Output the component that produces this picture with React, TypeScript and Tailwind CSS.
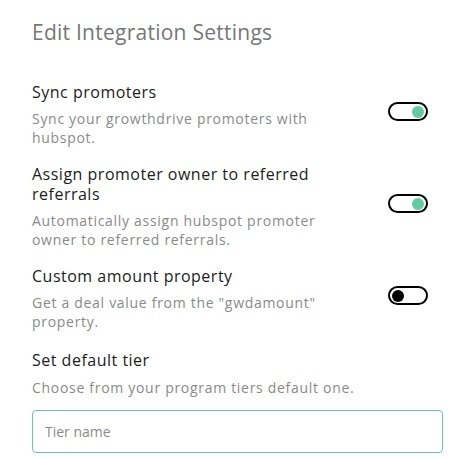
import React from "react";

function Toggle({ on }: { on: boolean }) {
  return (
    <div className="relative w-[40px] h-[19px] rounded-full border-2 border-black bg-white shrink-0">
      {on ? (
        <div className="absolute right-[2px] top-[1.5px] w-[12px] h-[12px] rounded-full bg-[#5fcca3]" />
      ) : (
        <div className="absolute left-[2px] top-[1.5px] w-[12px] h-[12px] rounded-full bg-black" />
      )}
    </div>
  );
}

function Row({ title, desc, on }: { title: string; desc: string; on: boolean }) {
  return (
    <div className="flex items-center justify-between">
      <div className="w-[310px]">
        <div className="text-[16px] leading-[20px] text-[#1c1c1c] tracking-[0.5px]">{title}</div>
        <div className="mt-[7px] text-[14px] leading-[19px] text-[#8a8a8a] tracking-[0.7px]">{desc}</div>
      </div>
      <div className="mr-[15px] -mt-[6px]">
        <Toggle on={on} />
      </div>
    </div>
  );
}

export default function App() {
  return (
    <div className="w-[457px] h-[458px] bg-white pl-[32px] pr-[14px] pt-[18px]" style={{ fontFamily: '"Open Sans", sans-serif' }}>
      <div className="text-[21px] leading-[28px] text-[#777777] tracking-[0.25px]">Edit Integration Settings</div>
      <div className="mt-[36px] flex flex-col gap-[17px]">
        <Row title="Sync promoters" desc="Sync your growthdrive promoters with hubspot." on={true} />
        <Row
          title="Assign promoter owner to referred referrals"
          desc="Automatically assign hubspot promoter owner to referred referrals."
          on={true}
        />
        <Row title="Custom amount property" desc={'Get a deal value from the "gwdamount" property.'} on={false} />
        <div className="mt-[2px]">
          <div className="text-[16px] leading-[20px] text-[#1c1c1c] tracking-[0.5px]">Set default tier</div>
          <div className="mt-[8px] text-[14px] leading-[19px] text-[#8a8a8a] tracking-[0.7px]">
            Choose from your program tiers default one.
          </div>
          <input
            className="mt-[13px] w-full h-[43px] rounded-[4px] border border-[#5fcca3] px-[12px] text-[14px] text-[#333] placeholder:text-[#8a8a8a] outline-none"
            placeholder="Tier name"
          />
        </div>
      </div>
    </div>
  );
}
